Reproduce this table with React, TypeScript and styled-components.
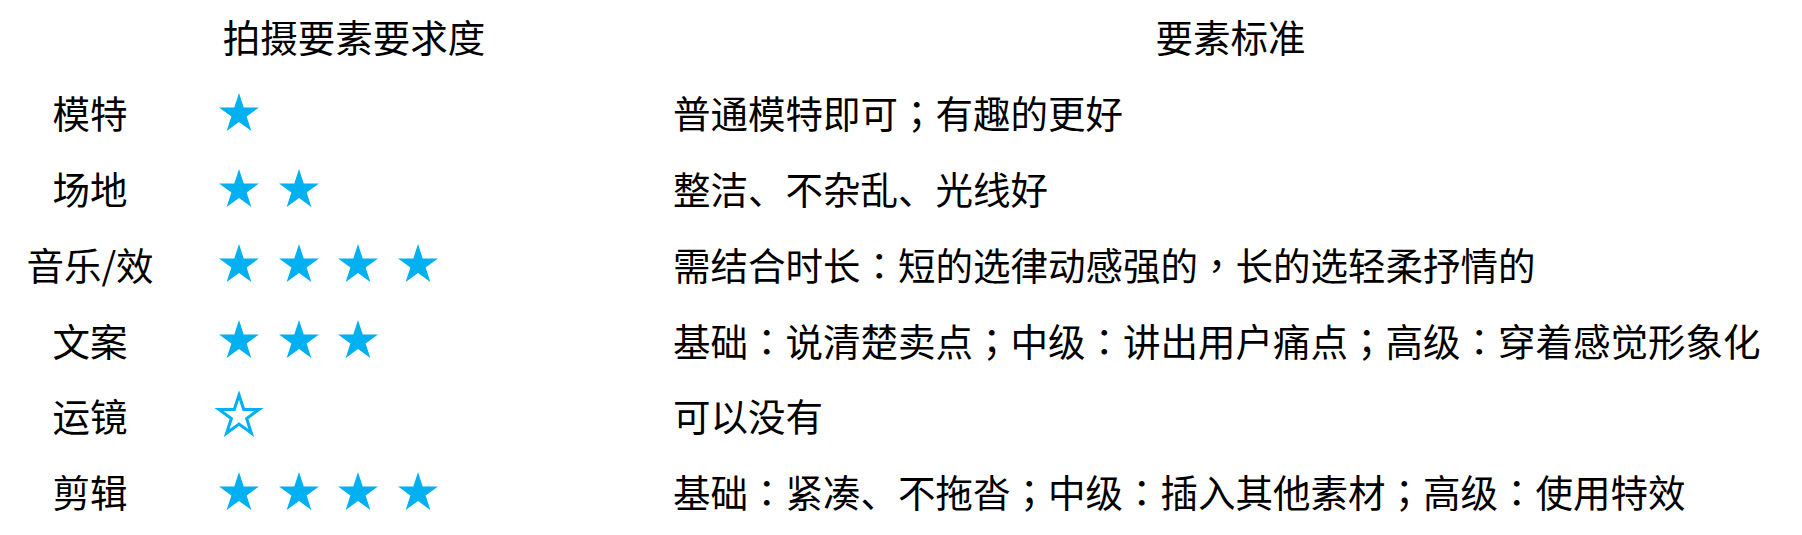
import styled, { createGlobalStyle } from 'styled-components';

const STAR_BLUE = '#00b0f0';

type Item = {
  label: string;
  stars: number; // 0 means one hollow star
  standard: string;
};

const items: Item[] = [
  { label: '模特', stars: 1, standard: '普通模特即可；有趣的更好' },
  { label: '场地', stars: 2, standard: '整洁、不杂乱、光线好' },
  { label: '音乐/效', stars: 4, standard: '需结合时长：短的选律动感强的，长的选轻柔抒情的' },
  { label: '文案', stars: 3, standard: '基础：说清楚卖点；中级：讲出用户痛点；高级：穿着感觉形象化' },
  { label: '运镜', stars: 0, standard: '可以没有' },
  { label: '剪辑', stars: 4, standard: '基础：紧凑、不拖沓；中级：插入其他素材；高级：使用特效' },
];

// 5 point star polygon, outer radius R, inner r
const starPoints = (cx: number, cy: number, R: number, r: number) => {
  const pts: string[] = [];
  for (let k = 0; k < 10; k++) {
    const rad = k % 2 === 0 ? R : r;
    const a = ((-90 + k * 36) * Math.PI) / 180;
    pts.push(`${(cx + rad * Math.cos(a)).toFixed(2)},${(cy + rad * Math.sin(a)).toFixed(2)}`);
  }
  return pts.join(' ');
};

const Star = ({ hollow }: { hollow?: boolean }) => {
  if (hollow) {
    return (
      <svg width="52" height="52" viewBox="0 0 52 52">
        <polygon
          points={starPoints(26, 27, 21, 21 * 0.382)}
          fill="#fff"
          stroke={STAR_BLUE}
          strokeWidth="3"
          strokeLinejoin="miter"
        />
      </svg>
    );
  }
  return (
    <svg width="40" height="38" viewBox="0 0 40 38">
      <polygon points={starPoints(20, 21, 21, 21 * 0.382)} fill={STAR_BLUE} />
    </svg>
  );
};

// colon / semicolon / comma sit centred in their box in the original
const withPunct = (text: string) =>
  text.split(/([：；，])/).map((part, i) =>
    /^[：；，]$/.test(part) ? <Punct key={i}>{part}</Punct> : part
  );

const App = () => {
  return (
    <>
      <GlobalStyle />
      <Sheet>
        <Row $height={74} $header>
          <LabelCell />
          <HeadCell>拍摄要素要求度</HeadCell>
          <StandardHead>要素标准</StandardHead>
        </Row>
        {items.map((item) => (
          <Row key={item.label} $height={75.8}>
            <LabelCell>{item.label}</LabelCell>
            <StarsCell>
              {item.stars === 0 ? (
                <StarSlot>
                  <Star hollow />
                </StarSlot>
              ) : (
                Array.from({ length: item.stars }).map((_, i) => (
                  <StarSlot key={i}>
                    <Star />
                  </StarSlot>
                ))
              )}
            </StarsCell>
            <StandardCell>{withPunct(item.standard)}</StandardCell>
          </Row>
        ))}
      </Sheet>
    </>
  );
};

const GlobalStyle = createGlobalStyle`
  html, body {
    margin: 0;
    padding: 0;
    background: #ffffff;
  }
  body {
    font-family: "Noto Sans CJK SC", "Noto Sans", sans-serif;
    color: #000;
  }
`;

const Sheet = styled.div`
  width: 1802px;
  height: 535px;
  display: flex;
  flex-direction: column;
  background: #fff;
`;

const Row = styled.div<{ $height: number; $header?: boolean }>`
  display: grid;
  grid-template-columns: 180px 348px 1fr;
  height: ${(p) => p.$height}px;
  align-items: center;
  padding-bottom: ${(p) => (p.$header ? 3 : 0)}px;
  box-sizing: border-box;
  font-size: 37.5px;
  line-height: 1;
`;

const LabelCell = styled.div`
  text-align: center;
  white-space: nowrap;
`;

const HeadCell = styled.div`
  text-align: center;
  white-space: nowrap;
`;

const StarsCell = styled.div`
  display: flex;
  align-items: center;
  gap: 19.5px;
  padding-left: 39px;
`;

const StarSlot = styled.div`
  width: 40px;
  display: flex;
  justify-content: center;
  align-items: center;

  svg {
    display: block;
    flex: none;
  }
`;

const StandardCell = styled.div`
  padding-left: 145px;
  white-space: nowrap;
`;

const Punct = styled.span`
  font-family: "Noto Sans CJK TC", "Noto Sans CJK SC", sans-serif;
`;

const StandardHead = styled.div`
  padding-left: 145px;
  padding-right: 14px;
  text-align: center;
  white-space: nowrap;
`;

export default App;
